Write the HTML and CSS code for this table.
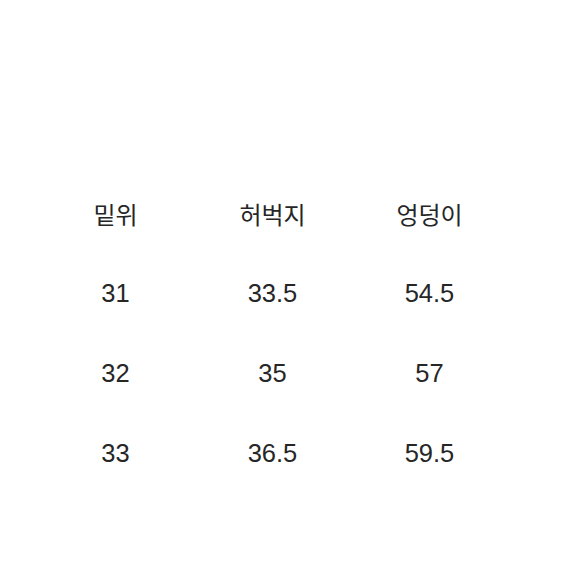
FILE: index.html
```html
<!DOCTYPE html>
<html lang="ko">
<head>
<meta charset="utf-8">
<link rel="stylesheet" href="styles.css">
</head>
<body>
<div class="page">
  <div class="table">
    <div class="cell">밑위</div>
    <div class="cell">허벅지</div>
    <div class="cell">엉덩이</div>
    <div class="cell num">31</div>
    <div class="cell num">33.5</div>
    <div class="cell num">54.5</div>
    <div class="cell num">32</div>
    <div class="cell num">35</div>
    <div class="cell num">57</div>
    <div class="cell num">33</div>
    <div class="cell num">36.5</div>
    <div class="cell num">59.5</div>
  </div>
</div>
</body>
</html>
```
FILE: styles.css
```css
html, body {
  margin: 0;
  padding: 0;
  background: #ffffff;
}
.page {
  width: 567px;
  height: 567px;
  padding-top: 173px;
  padding-left: 37px;
  box-sizing: border-box;
}
.table {
  display: grid;
  grid-template-columns: repeat(3, 157px);
  grid-auto-rows: 80px;
}
.cell {
  display: flex;
  align-items: center;
  justify-content: center;
  font-family: "Liberation Sans", "Noto Sans CJK KR", sans-serif;
  font-size: 24px;
  color: #262626;
}
.num {
  font-size: 25.5px;
}
```
